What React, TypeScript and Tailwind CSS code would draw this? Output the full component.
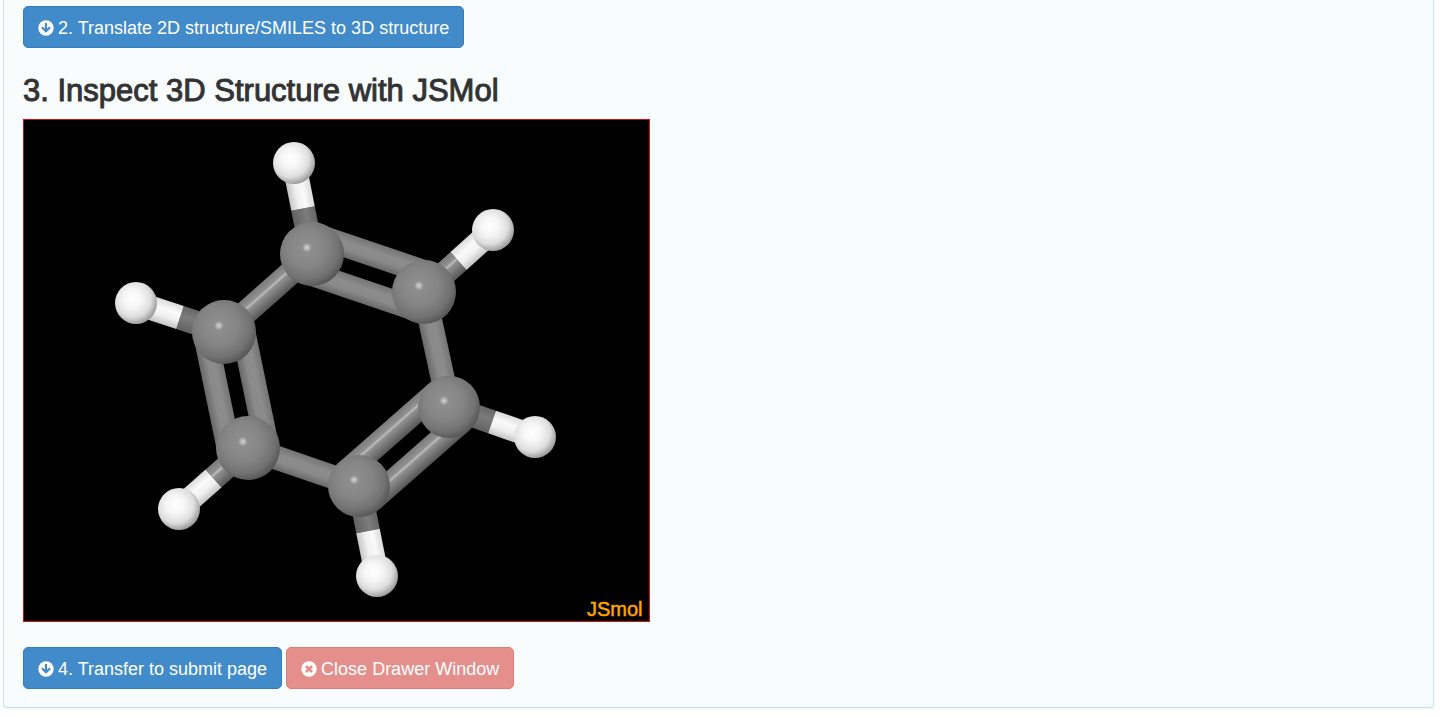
import type { ReactNode } from "react";

type Point = { x: number; y: number };

const carbons: (Point & { r: number })[] = [
  { x: 288, y: 134, r: 32 },
  { x: 400, y: 172, r: 32 },
  { x: 425, y: 287, r: 31 },
  { x: 335, y: 366, r: 31 },
  { x: 224, y: 328, r: 32 },
  { x: 200, y: 212, r: 32 },
];

const hydrogens: Point[] = [
  { x: 270, y: 43 },
  { x: 469, y: 110 },
  { x: 511, y: 317 },
  { x: 353, y: 456 },
  { x: 155, y: 389 },
  { x: 112, y: 183 },
];

function Bond({ from, to, offset = 0, split = false }: { from: Point; to: Point; offset?: number; split?: boolean }) {
  let a = from;
  let b = to;
  const flipped = b.x < a.x;
  if (flipped) [a, b] = [b, a];
  const length = Math.hypot(b.x - a.x, b.y - a.y);
  const angle = (Math.atan2(b.y - a.y, b.x - a.x) * 180) / Math.PI;
  const glossy = angle < -30 && angle > -60;
  const half = length / 2;
  return (
    <g transform={`translate(${a.x} ${a.y}) rotate(${angle}) translate(0 ${offset})`}>
      {split ? (
        <>
          <rect x={flipped ? half : 0} y={-12} width={half} height={24} fill={glossy ? "url(#tubeGloss)" : "url(#tubeShade)"} />
          <rect x={flipped ? 0 : half} y={-12} width={half} height={24} fill="url(#tubeWhite)" />
        </>
      ) : (
        <rect y={-12} width={length} height={24} fill={glossy ? "url(#tubeGloss)" : "url(#tube)"} />
      )}
    </g>
  );
}

function Molecule() {
  return (
    <svg viewBox="0 0 625 501" className="block w-full" role="img" aria-label="Benzene">
      <defs>
        <linearGradient id="tube" x1="0" y1="0" x2="0" y2="1">
          <stop offset="0" stopColor="#747474" />
          <stop offset="0.35" stopColor="#8c8c8c" />
          <stop offset="0.65" stopColor="#8a8a8a" />
          <stop offset="1" stopColor="#686868" />
        </linearGradient>
        <linearGradient id="tubeShade" x1="0" y1="0" x2="0" y2="1">
          <stop offset="0" stopColor="#666666" />
          <stop offset="0.4" stopColor="#7c7c7c" />
          <stop offset="1" stopColor="#626262" />
        </linearGradient>
        <linearGradient id="tubeGloss" x1="0" y1="0" x2="0" y2="1">
          <stop offset="0" stopColor="#7a7a7a" />
          <stop offset="0.32" stopColor="#929292" />
          <stop offset="0.36" stopColor="#b4b4b4" />
          <stop offset="0.42" stopColor="#b4b4b4" />
          <stop offset="0.46" stopColor="#929292" />
          <stop offset="1" stopColor="#565656" />
        </linearGradient>
        <linearGradient id="tubeWhite" x1="0" y1="0" x2="0" y2="1">
          <stop offset="0" stopColor="#dadada" />
          <stop offset="0.35" stopColor="#fafafa" />
          <stop offset="0.65" stopColor="#f0f0f0" />
          <stop offset="1" stopColor="#c4c4c4" />
        </linearGradient>
        <radialGradient id="carbon" cx="0.42" cy="0.4" r="0.62">
          <stop offset="0" stopColor="#d8d8d8" />
          <stop offset="0.05" stopColor="#b8b8b8" />
          <stop offset="0.12" stopColor="#8e8e8e" />
          <stop offset="0.5" stopColor="#848484" />
          <stop offset="0.8" stopColor="#727272" />
          <stop offset="1" stopColor="#565656" />
        </radialGradient>
        <radialGradient id="hydrogen" cx="0.42" cy="0.4" r="0.62">
          <stop offset="0" stopColor="#ffffff" />
          <stop offset="0.35" stopColor="#f6f6f6" />
          <stop offset="0.7" stopColor="#dedede" />
          <stop offset="1" stopColor="#989898" />
        </radialGradient>
      </defs>
      {carbons.map((c, i) => (
        <Bond key={i} from={c} to={hydrogens[i]} split />
      ))}
      {carbons.map((c, i) => {
        const next = carbons[(i + 1) % carbons.length];
        return i % 2 === 0 ? (
          <g key={i}>
            <Bond from={c} to={next} offset={-19} />
            <Bond from={c} to={next} offset={19} />
          </g>
        ) : (
          <Bond key={i} from={c} to={next} />
        );
      })}
      {carbons.map((c, i) => (
        <circle key={i} cx={c.x} cy={c.y} r={c.r} fill="url(#carbon)" />
      ))}
      {hydrogens.map((h, i) => (
        <circle key={i} cx={h.x} cy={h.y} r={21} fill="url(#hydrogen)" />
      ))}
      <text x="563" y="496" fontSize="20" fill="#ffa500" stroke="#ffa500" strokeWidth="0.5" fontFamily="Liberation Sans, Arial, sans-serif">
        JSmol
      </text>
    </svg>
  );
}

function ArrowIcon() {
  return (
    <svg viewBox="0 0 16 16" className="size-4" aria-hidden="true">
      <circle cx="8" cy="8" r="7.7" fill="#fff" />
      <path d="M8 3V11M3.9 7.2L8 11.3L12.1 7.2" fill="none" stroke="#428bca" strokeWidth="2.2" />
    </svg>
  );
}

function CloseIcon() {
  return (
    <svg viewBox="0 0 16 16" className="size-4" aria-hidden="true">
      <circle cx="8" cy="8" r="7.7" fill="#fff" />
      <path d="M5 5L11 11M11 5L5 11" fill="none" stroke="#e48f8c" strokeWidth="2.7" />
    </svg>
  );
}

function ActionButton({ icon, danger = false, children }: { icon: ReactNode; danger?: boolean; children: ReactNode }) {
  return (
    <button
      type="button"
      className={`inline-flex items-center gap-1 rounded-[5px] border px-[14px] pt-[9px] pb-[7px] text-lg leading-6 text-white ${
        danger ? "border-[#e27c79] bg-[#e48f8c]" : "border-[#357ebd] bg-[#428bca]"
      }`}
    >
      {icon}
      <span>{children}</span>
    </button>
  );
}

export default function App() {
  return (
    <main className="bg-white pr-[6px] pb-2 pl-[3px] font-['Liberation_Sans',Arial,sans-serif] text-[#333]">
      <section className="rounded-b border border-t-0 border-[#bce8f1] bg-[#f8fcfd] px-[19px] pt-[6px] pb-[18px] shadow-xs">
        <ActionButton icon={<ArrowIcon />}>2. Translate 2D structure/SMILES to 3D structure</ActionButton>
        <h2 className="mt-[25px] mb-[11px] text-[31px] leading-[35px] font-normal [-webkit-text-stroke:1px_#333]">
          3. Inspect 3D Structure with JSMol
        </h2>
        <div className="max-w-[627px] border border-[#d01010] bg-black">
          <Molecule />
        </div>
        <div className="mt-[25px] flex flex-wrap gap-1">
          <ActionButton icon={<ArrowIcon />}>4. Transfer to submit page</ActionButton>
          <ActionButton icon={<CloseIcon />} danger>
            Close Drawer Window
          </ActionButton>
        </div>
      </section>
    </main>
  );
}
